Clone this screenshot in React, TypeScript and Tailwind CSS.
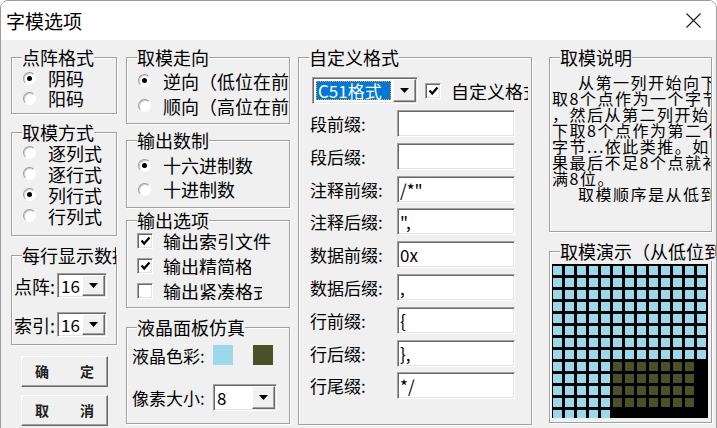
import React from 'react';

type Kids = { children?: React.ReactNode };

function Group({
  title,
  className = '',
  titleClass = '',
  children,
}: { title: string; className?: string; titleClass?: string } & Kids) {
  return (
    <div
      className={`relative border border-[#a0a0a0] shadow-[inset_1px_1px_0_#ffffff,1px_1px_0_#ffffff] ${className}`}
    >
      <span
        className={`absolute left-[10px] -top-[11px] overflow-hidden whitespace-nowrap bg-[#f0f0f0] text-[18px] leading-[20px] ${titleClass}`}
      >
        {title}
      </span>
      {children}
    </div>
  );
}

function Radio({ checked = false, label, className = '' }: { checked?: boolean; label: string; className?: string }) {
  return (
    <div className={`flex items-center gap-[12px] overflow-hidden whitespace-nowrap ${className}`}>
      <span className="flex h-[13px] w-[13px] shrink-0 items-center justify-center rounded-full border border-t-[#999999] border-l-[#999999] border-b-white border-r-white bg-white shadow-[inset_1px_1px_0_#cfcfcf]">
        {checked && <span className="h-[5px] w-[5px] rounded-full bg-black" />}
      </span>
      <span className="text-[18px] leading-none">{label}</span>
    </div>
  );
}

function CheckMark() {
  return (
    <svg width="11" height="10" viewBox="0 0 11 10">
      <path d="M1.5 4.5 L4.2 7.5 L9.5 1.5" stroke="#000" strokeWidth="2.2" fill="none" />
    </svg>
  );
}

function Check({
  checked = false,
  label,
  labelClass = '',
  className = '',
}: { checked?: boolean; label: string; labelClass?: string; className?: string }) {
  return (
    <div className={`flex items-center gap-[10px] overflow-hidden whitespace-nowrap ${className}`}>
      <span className="flex h-[16px] w-[16px] shrink-0 items-center justify-center border border-t-[#a0a0a0] border-l-[#a0a0a0] border-b-white border-r-white bg-white shadow-[inset_1px_1px_0_#696969,inset_-1px_-1px_0_#e3e3e3]">
        {checked && <CheckMark />}
      </span>
      <span className={`overflow-hidden text-[18px] leading-none ${labelClass}`}>{label}</span>
    </div>
  );
}

function Arrow() {
  return (
    <svg width="9" height="5" viewBox="0 0 9 5">
      <path d="M0 0 H9 L4.5 5 Z" fill="#000" />
    </svg>
  );
}

function Combo({ value, className = '' }: { value: string; className?: string }) {
  return (
    <div
      className={`flex border border-t-[#a0a0a0] border-l-[#a0a0a0] border-b-white border-r-white bg-white p-[1px] shadow-[inset_1px_1px_0_#696969,inset_-1px_-1px_0_#e3e3e3] ${className}`}
    >
      <div className="flex flex-1 items-center pl-[2px] text-[17px] leading-none">{value}</div>
      <div className="flex w-[23px] items-center justify-center border border-t-white border-l-white border-b-[#696969] border-r-[#696969] bg-[#f0f0f0] shadow-[inset_-1px_-1px_0_#a0a0a0]">
        <Arrow />
      </div>
    </div>
  );
}

function PushButton({ a, b }: { a: string; b: string }) {
  return (
    <div className="ml-[10px] flex h-[31px] w-[87px] items-center justify-between border border-t-white border-l-white border-b-[#696969] border-r-[#696969] bg-[#f0f0f0] px-[13px] text-[14px] font-semibold text-[#202020] shadow-[inset_-1px_-1px_0_#a0a0a0]">
      <span>{a}</span>
      <span>{b}</span>
    </div>
  );
}

function Field({ label, value }: { label: string; value: string }) {
  return (
    <div className="flex h-[27px] items-center">
      <span className="w-[87px] text-[17px] leading-none">{label}</span>
      <div className="flex h-[27px] w-[118px] items-center border border-t-[#a0a0a0] border-l-[#a0a0a0] border-b-white border-r-white bg-white pl-[2px] text-[17px] leading-none shadow-[inset_1px_1px_0_#696969,inset_-1px_-1px_0_#e3e3e3]">
        {value}
      </div>
    </div>
  );
}

const fields: [string, string][] = [
  ['段前缀:', ''],
  ['段后缀:', ''],
  ['注释前缀:', '/*"'],
  ['注释后缀:', '",'],
  ['数据前缀:', '0x'],
  ['数据后缀:', ','],
  ['行前缀:', '{'],
  ['行后缀:', '},'],
  ['行尾缀:', '*/'],
];

const notes = [
  '从第一列开始向下',
  '取8个点作为一个字节',
  '，然后从第二列开始向',
  '下取8个点作为第二个',
  '字节...依此类推。如',
  '果最后不足8个点就补',
  '满8位。',
];

function cellClass(r: number, c: number) {
  if (r < 8 || c < 5) return 'bg-[#99d9ea]';
  if (r < 12 && c < 12) return 'bg-[#4b5126]';
  return 'bg-black';
}

function LcdGrid() {
  const cells = [];
  for (let r = 0; r < 16; r++) {
    for (let c = 0; c < 16; c++) {
      cells.push(<div key={`${r}-${c}`} className={`h-[9px] w-[9px] ${cellClass(r, c)}`} />);
    }
  }
  return (
    <div className="h-[154px] w-[156px] overflow-hidden bg-black">
      <div className="grid grid-cols-[repeat(16,9px)] gap-[3px] pl-[1px] pt-[2px]">{cells}</div>
    </div>
  );
}

export default function App() {
  return (
    <div className="h-[428px] w-[717px] overflow-hidden bg-white font-['Noto_Sans_CJK_SC','Noto_Sans',sans-serif] text-black">
      <div className="flex h-[440px] flex-col overflow-hidden rounded-t-[8px] border border-[#9c9c9c]">
        {/* title bar */}
        <div className="flex h-[39px] shrink-0 items-center justify-between bg-white pl-[5px] pr-[15px]">
          <span className="text-[19px] leading-none">字模选项</span>
          <svg width="15" height="15" viewBox="0 0 15 15">
            <path d="M0.5 0.5 L14.5 14.5 M14.5 0.5 L0.5 14.5" stroke="#1b1b1b" strokeWidth="1.1" />
          </svg>
        </div>

        {/* body */}
        <div className="flex flex-1 items-start bg-[#f0f0f0] pl-[10px] pt-[17px]">
          {/* column 1 */}
          <div className="flex w-[106px] flex-col">
            <Group title="点阵格式" className="h-[57px] pl-[11px] pt-[10px]">
              <Radio checked label="阴码" className="h-[20px]" />
              <Radio label="阳码" className="h-[20px]" />
            </Group>
            <Group title="取模方式" className="mt-[18px] h-[104px] pl-[11px] pt-[9px]">
              <Radio label="逐列式" className="h-[21px]" />
              <Radio label="逐行式" className="h-[21px]" />
              <Radio checked label="列行式" className="h-[21px]" />
              <Radio label="行列式" className="h-[21px]" />
            </Group>
            <Group title="每行显示数据" titleClass="max-w-[94px]" className="mt-[19px] h-[90px] pl-[2px] pt-[17px]">
              <div className="flex items-center">
                <span className="w-[43px] text-[18px] leading-none">点阵:</span>
                <Combo value="16" className="h-[25px] w-[50px]" />
              </div>
              <div className="mt-[14px] flex items-center">
                <span className="w-[43px] text-[18px] leading-none">索引:</span>
                <Combo value="16" className="h-[25px] w-[50px]" />
              </div>
            </Group>
            <div className="mt-[11px]">
              <PushButton a="确" b="定" />
            </div>
            <div className="mt-[8px]">
              <PushButton a="取" b="消" />
            </div>
          </div>

          {/* column 2 */}
          <div className="ml-[9px] flex w-[164px] flex-col">
            <Group title="取模走向" className="h-[67px] pl-[11px] pt-[10px]">
              <Radio checked label="逆向（低位在前）" className="h-[25px]" />
              <Radio label="顺向（高位在前）" className="h-[25px]" />
            </Group>
            <Group title="输出数制" className="mt-[16px] h-[68px] pl-[11px] pt-[12px]">
              <Radio checked label="十六进制数" className="h-[24px]" />
              <Radio label="十进制数" className="h-[24px]" />
            </Group>
            <Group title="输出选项" className="mt-[12px] h-[88px] pl-[10px] pt-[7px]">
              <Check checked label="输出索引文件" className="h-[25px]" />
              <Check checked label="输出精简格式" labelClass="w-[88px]" className="h-[25px]" />
              <Check label="输出紧凑格式" labelClass="w-[99px]" className="h-[25px]" />
            </Group>
            <Group title="液晶面板仿真" className="mt-[19px] h-[97px] pl-[5px] pt-[17px]">
              <div className="flex h-[20px] items-center">
                <span className="w-[81px] text-[17px] leading-none">液晶色彩:</span>
                <div className="h-[20px] w-[20px] bg-[#99d9ea]" />
                <div className="ml-[20px] h-[20px] w-[20px] bg-[#4b5126]" />
              </div>
              <div className="mt-[19px] flex items-center">
                <span className="w-[81px] text-[17px] leading-none">像素大小:</span>
                <Combo value="8" className="h-[27px] w-[64px]" />
              </div>
            </Group>
          </div>

          {/* column 3 */}
          <div className="ml-[8px] w-[234px]">
            <Group title="自定义格式" className="h-[368px] pt-[19px]">
              <div className="flex items-center overflow-hidden whitespace-nowrap pl-[13px] pr-[3px]">
                <div className="flex h-[27px] w-[106px] shrink-0 border border-t-[#a0a0a0] border-l-[#a0a0a0] border-b-white border-r-white bg-white p-[1px] shadow-[inset_1px_1px_0_#696969,inset_-1px_-1px_0_#e3e3e3]">
                  <div className="flex flex-1 items-stretch py-[2px] pl-[2px] pr-[2px]">
                    <div className="flex flex-1 items-center border border-dotted border-[#f5a623] bg-[#0078d7] pl-[1px] text-[17px] leading-none text-white">
                      C51格式
                    </div>
                  </div>
                  <div className="flex w-[23px] items-center justify-center border border-t-white border-l-white border-b-[#696969] border-r-[#696969] bg-[#f0f0f0] shadow-[inset_-1px_-1px_0_#a0a0a0]">
                    <Arrow />
                  </div>
                </div>
                <Check checked label="自定义格式" className="ml-[7px]" />
              </div>
              <div className="mt-[6px] flex flex-col gap-[5.8px] pl-[11px]">
                {fields.map(([l, v]) => (
                  <Field key={l} label={l} value={v} />
                ))}
              </div>
            </Group>
          </div>

          {/* column 4 */}
          <div className="ml-[17px] flex w-[163px] flex-col">
            <Group title="取模说明" className="h-[175px] pl-[2px] pt-[16px]">
              <div className="overflow-hidden text-[16px] leading-[16px] tracking-[1.5px]">
                {notes.map((t, i) => (
                  <div key={i} className={`h-[16px] whitespace-nowrap ${i === 0 ? 'pl-[26px]' : ''}`}>
                    {t}
                  </div>
                ))}
                <div className="h-[16px] whitespace-nowrap pl-[26px]">取模顺序是从低到高</div>
              </div>
            </Group>
            <Group title="取模演示（从低位到高位）" className="mt-[19px] h-[172px] pl-[2px] pt-[12px]">
              <LcdGrid />
            </Group>
          </div>
        </div>
      </div>
    </div>
  );
}
